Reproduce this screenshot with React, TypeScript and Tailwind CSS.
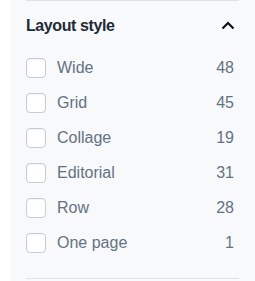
const options = [
  { label: 'Wide', count: 48 },
  { label: 'Grid', count: 45 },
  { label: 'Collage', count: 19 },
  { label: 'Editorial', count: 31 },
  { label: 'Row', count: 28 },
  { label: 'One page', count: 1 },
]

export default function App() {
  return (
    <div className="h-[281px] w-[255px] bg-white pl-[11px] font-['Liberation_Sans',Arial,sans-serif]">
      <div className="h-full bg-[#f8f9fb] pl-[15px] pr-[16px]">
        <div className="h-px bg-[#dfe3e8]" />
        <div className="flex h-[49px] items-center justify-between pr-[4px]">
          <h3 className="text-[16px] font-bold tracking-[-0.4px] text-[#212b36]">Layout style</h3>
          <svg width="14" height="9" viewBox="0 0 14 9" fill="none">
            <path d="M1.5 7.5L7 2L12.5 7.5" stroke="#111" strokeWidth="2.2" />
          </svg>
        </div>
        <ul>
          {options.map((o) => (
            <li key={o.label} className="flex h-[35px] items-center pr-[5px]">
              <span className="h-[20px] w-[20px] shrink-0 rounded-[4px] border border-[#c4cdd5] bg-white shadow-[inset_0_1px_1px_rgba(99,115,129,0.08)]" />
              <span className="ml-[11px] flex-1 text-[16px] text-[#637381]">{o.label}</span>
              <span className="text-[16px] text-[#637381]">{o.count}</span>
            </li>
          ))}
        </ul>
        <div className="mt-[18px] h-px bg-[#dfe3e8]" />
      </div>
    </div>
  )
}
